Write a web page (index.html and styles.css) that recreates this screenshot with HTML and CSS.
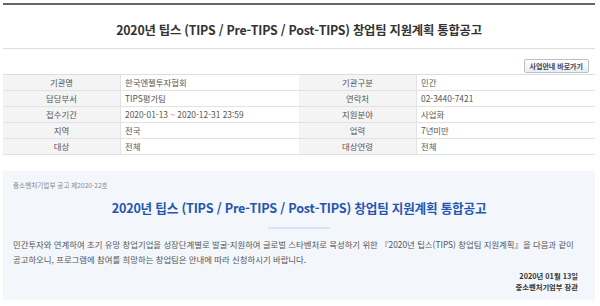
FILE: index.html
```html
<!DOCTYPE html>
<html lang="ko">
<head>
<meta charset="utf-8">
<link rel="stylesheet" href="styles.css">
</head>
<body>
<div class="page">
  <div class="topbar"></div>
  <h1 class="title">2020년 팁스 (TIPS / Pre-TIPS / Post-TIPS) 창업팀 지원계획 통합공고</h1>
  <div class="btn-row"><span class="btn">사업안내 바로가기</span></div>
  <div class="info">
    <div class="lbl">기관명</div><div class="val">한국엔젤투자협회</div>
    <div class="lbl">기관구분</div><div class="val">민간</div>
    <div class="lbl">담당부서</div><div class="val">TIPS평가팀</div>
    <div class="lbl">연락처</div><div class="val">02-3440-7421</div>
    <div class="lbl">접수기간</div><div class="val">2020-01-13 ~ 2020-12-31 23:59</div>
    <div class="lbl">지원분야</div><div class="val">사업화</div>
    <div class="lbl">지역</div><div class="val">전국</div>
    <div class="lbl">업력</div><div class="val">7년미만</div>
    <div class="lbl">대상</div><div class="val">전체</div>
    <div class="lbl">대상연령</div><div class="val">전체</div>
  </div>
  <div class="notice">
    <div class="notice-no">중소벤처기업부 공고 제2020-22호</div>
    <h2 class="notice-title">2020년 팁스 (TIPS / Pre-TIPS / Post-TIPS) 창업팀 지원계획 통합공고</h2>
    <div class="divider"></div>
    <p class="notice-body"><span class="ln">민간투자와 연계하여 초기 유망 창업기업을 성장단계별로 발굴·지원하여 글로벌 스타벤처로 육성하기 위한 『2020년 팁스(TIPS) 창업팀 지원계획』을 다음과 같이</span><span class="ln">공고하오니, 프로그램에 참여를 희망하는 창업팀은 안내에 따라 신청하시기 바랍니다.</span></p>
    <div class="sign">
      <div>2020년 01월 13일</div>
      <div>중소벤처기업부 장관</div>
    </div>
  </div>
</div>
</body>
</html>
```

FILE: styles.css
```css
html, body {
  margin: 0;
  padding: 0;
  background: #fff;
}
body {
  font-family: "Noto Sans CJK KR", "Noto Sans", sans-serif;
  color: #555;
}
.page {
  padding: 3px 5px 0 3px;
}
.topbar {
  height: 2px;
  background: #666;
}
.title {
  margin: 0;
  padding: 15px 0 8px;
  font-size: 12.3px;
  line-height: 20px;
  font-weight: 700;
  color: #333;
  text-align: center;
  border-bottom: 1px solid #ddd;
  letter-spacing: -0.2px;
}
.btn-row {
  display: flex;
  justify-content: flex-end;
  padding: 10px 6px 1px 0;
}
.btn {
  display: block;
  height: 12px;
  line-height: 12px;
  padding: 0 5px;
  font-size: 7px;
  font-weight: 700;
  color: #445;
  border: 1px solid #b8c2cc;
  border-radius: 2px;
  background: linear-gradient(#ffffff, #e9eef3);
}
.info {
  display: grid;
  grid-template-columns: 118px 178px 118px 178px;
  grid-auto-rows: 16px;
  border-top: 1px solid #ddd;
}
.lbl, .val {
  font-size: 8.4px;
  line-height: 15px;
  border-bottom: 1px solid #e2e2e2;
  white-space: nowrap;
  overflow: hidden;
}
.lbl {
  background: #f4f4f4;
  text-align: center;
  color: #555;
  border-right: 1px solid #e2e2e2;
}
.val {
  background: #fff;
  padding-left: 4px;
  color: #555;
}
.notice {
  margin-top: 16px;
  height: 129px;
  background: #f3f7fc;
  padding: 9px 10px 0 10px;
  box-sizing: border-box;
}
.notice-no {
  font-size: 6.6px;
  line-height: 10px;
  color: #888;
}
.notice-title {
  margin: 7px 0 0;
  font-size: 12.6px;
  line-height: 22px;
  font-weight: 700;
  color: #2456b0;
  text-align: center;
  letter-spacing: -0.2px;
}
.divider {
  width: 62px;
  height: 2px;
  margin: 8px auto 0;
  background: #d6e6f8;
}
.notice-body {
  margin: 8px 0 0;
  font-size: 8.4px;
  line-height: 15px;
  color: #555;
}
.ln {
  display: block;
  white-space: nowrap;
}
.sign {
  margin-top: 4px;
  padding-right: 7px;
  text-align: right;
  font-size: 7.3px;
  line-height: 11px;
  font-weight: 700;
  color: #333;
}
```
